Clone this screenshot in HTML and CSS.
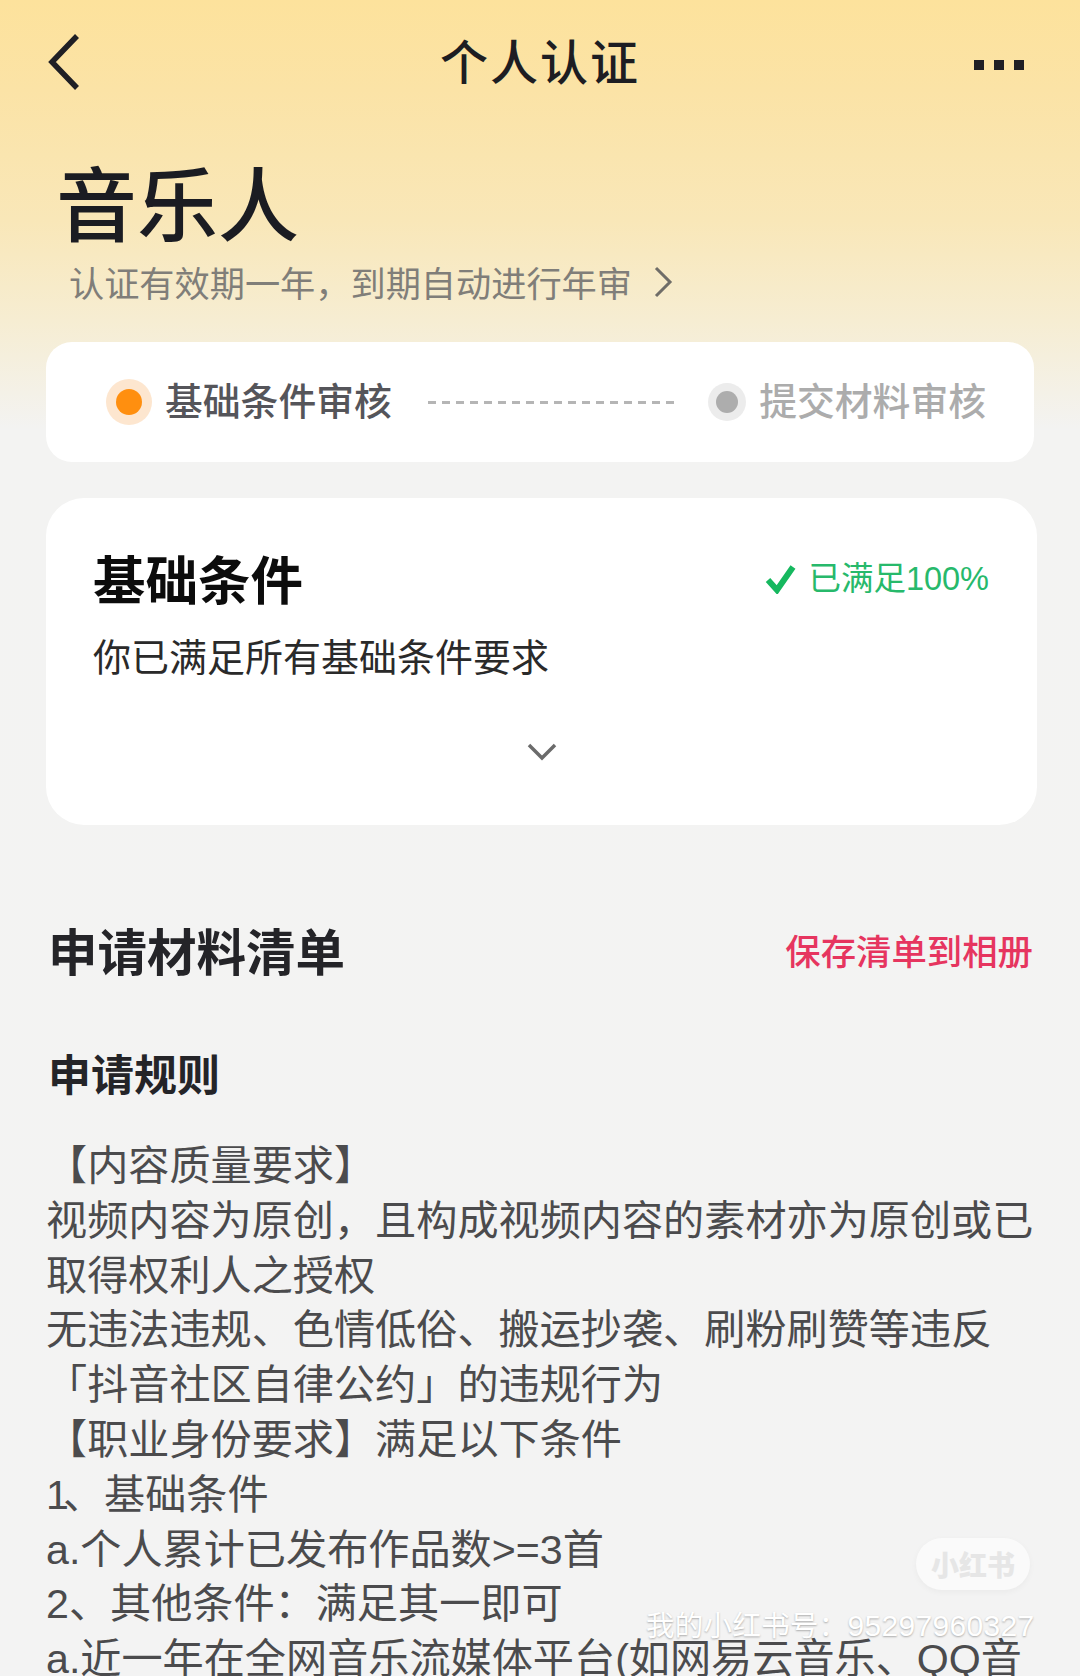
FILE: index.html
```html
<!DOCTYPE html>
<html lang="zh-CN">
<head>
<meta charset="utf-8">
<title>个人认证</title>
<link rel="stylesheet" href="styles.css">
</head>
<body>
<div class="page">
  <header class="nav">
    <svg class="nav-back" width="36" height="58" viewBox="0 0 36 58"><path d="M31 3 L6 29 L31 55" fill="none" stroke="#1f1f24" stroke-width="5.5"/></svg>
    <h1 class="nav-title">个人认证</h1>
    <div class="nav-more"><span></span><span></span><span></span></div>
  </header>
  <section class="hero">
    <h2 class="hero-title">音乐人</h2>
    <div class="hero-sub"><span>认证有效期一年，到期自动进行年审</span>
      <svg width="20" height="32" viewBox="0 0 20 32"><path d="M3 2 L17 16 L3 30" fill="none" stroke="#6f6d68" stroke-width="3"/></svg>
    </div>
  </section>
  <section class="stepper">
    <div class="step">
      <span class="dot dot-on"><i></i></span>
      <span class="step-label">基础条件审核</span>
    </div>
    <div class="dash"></div>
    <div class="step step-off">
      <span class="dot dot-off"><i></i></span>
      <span class="step-label">提交材料审核</span>
    </div>
  </section>
  <section class="card">
    <div class="card-head">
      <h3 class="card-title">基础条件</h3>
      <div class="status">
        <svg width="32" height="30" viewBox="0 0 32 30"><path d="M3 16 L12 26 L28 3" fill="none" stroke="#16b85f" stroke-width="6"/></svg>
        <span>已满足100%</span>
      </div>
    </div>
    <p class="card-desc">你已满足所有基础条件要求</p>
    <div class="card-toggle">
      <svg width="30" height="18" viewBox="0 0 30 18"><path d="M2 2 L15 15 L28 2" fill="none" stroke="#6b6b6b" stroke-width="3.5"/></svg>
    </div>
  </section>
  <section class="list-head">
    <h3 class="list-title">申请材料清单</h3>
    <span class="list-save">保存清单到相册</span>
  </section>
  <section class="rules">
    <h4 class="rules-title">申请规则</h4>
    <div class="rules-body">
      <p>【内容质量要求】</p>
      <p>视频内容为原创，且构成视频内容的素材亦为原创或已</p>
      <p>取得权利人之授权</p>
      <p>无违法违规、色情低俗、搬运抄袭、刷粉刷赞等违反</p>
      <p>「抖音社区自律公约」的违规行为</p>
      <p>【职业身份要求】满足以下条件</p>
      <p><span class="narrow-one">1</span>、基础条件</p>
      <p>a.个人累计已发布作品数&gt;=3首</p>
      <p>2、其他条件：满足其一即可</p>
      <p>a.近一年在全网音乐流媒体平台(如网易云音乐、QQ音</p>
    </div>
  </section>
  <div class="mark-logo">小红书</div>
  <div class="mark-id">我的小红书号：<span class="mark-num">95297960327</span></div>
</div>
</body>
</html>
```
FILE: styles.css
```css
* { box-sizing: border-box; margin: 0; padding: 0; }
html, body { width: 1080px; height: 1676px; overflow: hidden; }
body { font-family: "Noto Sans CJK SC", "Liberation Sans", sans-serif; background: #f3f3f3; }
.page {
  position: relative;
  width: 1080px;
  height: 1676px;
  overflow: hidden;
  padding: 0 44px 0 46px;
  background: linear-gradient(180deg, #fde29c 0, #fbe3a6 90px, #f9e7b8 220px, #f6edd2 320px, #f3f3f2 430px, #f3f3f3 100%);
}
.nav { display: flex; align-items: center; justify-content: space-between; height: 124px; }
.nav-back { display: block; }
.nav-title { font-size: 48px; line-height: 60px; font-weight: 500; color: #1d1d22; letter-spacing: 2px; position: absolute; left: 0; right: 0; top: 29px; text-align: center; }
.nav-more { display: flex; gap: 10px; margin: 6px 12px 0 0; }
.nav-more span { width: 10px; height: 10px; background: #1f1f24; }

.hero { padding: 31px 0 0 10px; }
.hero-title { font-size: 81px; line-height: 90px; font-weight: 500; color: #1b1c22; }
.hero-sub { display: flex; align-items: center; gap: 21px; margin-top: 14px; padding-left: 13px; font-size: 35.2px; line-height: 46px; color: #807e79; }

.stepper { display: flex; align-items: center; height: 120px; margin-top: 37px; width: 988px; padding: 0 48px 0 60px; background: #fff; border-radius: 26px; }
.step { display: flex; align-items: center; gap: 13px; }
.step-label { font-size: 37.8px; line-height: 48px; padding-bottom: 6px; color: #55555a; font-weight: 500; white-space: nowrap; }
.step-off .step-label { color: #acacac; }
.dot { display: flex; align-items: center; justify-content: center; border-radius: 50%; }
.dot-on { width: 46px; height: 46px; background: #fde6cf; }
.dot-on i { width: 26px; height: 26px; border-radius: 50%; background: #ff8f0f; }
.dot-off { width: 38px; height: 38px; background: #ececec; }
.dot-off i { width: 22px; height: 22px; border-radius: 50%; background: #adadad; }
.dash { flex: 1; height: 3px; margin: 0 32px 0 36px; background: repeating-linear-gradient(90deg, #b5b5b5 0 8px, transparent 8px 14px); }

.card { margin-top: 36px; height: 327px; width: 991px; padding: 50px 48px 0 47px; background: #fff; border-radius: 38px; }
.card-head { display: flex; align-items: center; justify-content: space-between; height: 64px; margin-top: -1px; }
.card-title { font-size: 52.5px; line-height: 64px; padding-bottom: 5px; font-weight: 700; color: #0c0c0c; }
.status { display: flex; align-items: center; gap: 11px; font-family: "Liberation Sans", "Noto Sans CJK SC", sans-serif; font-size: 32.5px; color: #27b96b; line-height: 44px; }
.card-desc { margin-top: 19px; font-size: 38px; line-height: 50px; color: #2a2a2a; }
.card-toggle { display: flex; justify-content: center; margin-top: 63px; padding-left: 2px; }

.list-head { display: flex; align-items: center; justify-content: space-between; margin-top: 93px; padding: 0 3px 0 2px; height: 64px; }
.list-title { font-size: 49.5px; line-height: 64px; font-weight: 700; color: #242428; }
.list-save { font-size: 35.4px; line-height: 48px; font-weight: 500; color: #e6355f; }

.rules { margin-top: 62px; }
.rules-title { padding-left: 2px; font-size: 43px; line-height: 56px; font-weight: 700; color: #242428; }
.rules-body { margin-top: 39px; font-family: "Liberation Sans", "Noto Sans CJK SC", sans-serif; font-size: 41.15px; line-height: 54.8px; color: #4b4b4d; white-space: nowrap; }
.narrow-one { letter-spacing: -6px; }

.mark-logo {
  position: absolute; left: 916px; top: 1538px; width: 114px; height: 52px;
  display: flex; align-items: center; justify-content: center;
  border-radius: 26px; background: #fafafa; box-shadow: 0 2px 6px rgba(0,0,0,.04);
  font-size: 28px; font-weight: 900; color: #e6e6e6;
}
.mark-id {
  position: absolute; left: 646px; top: 1607px; font-family: "Liberation Sans", "Noto Sans CJK SC", sans-serif; font-size: 28.5px; line-height: 38px; letter-spacing: .3px; white-space: nowrap;
  color: #fff; text-shadow: 0 1px 2px rgba(0,0,0,.3);
}
.mark-num { font-size: 30px; }
```
